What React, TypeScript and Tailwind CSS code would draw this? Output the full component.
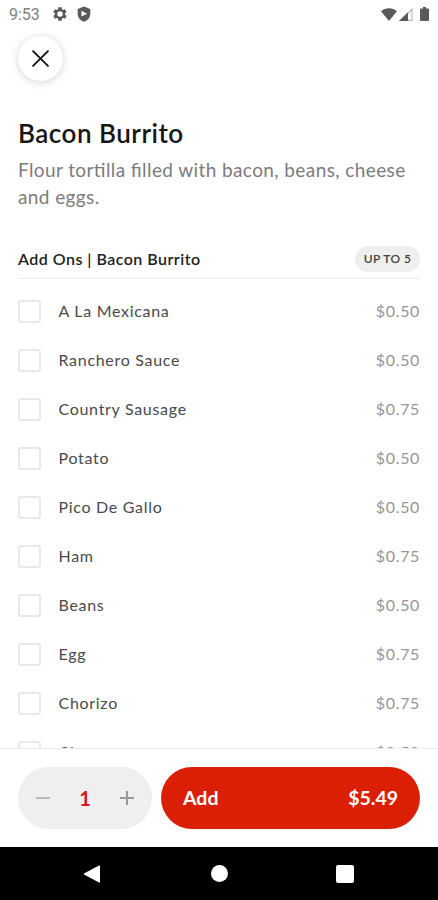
import { useState } from 'react';

type AddOn = {
  name: string;
  price: string;
};

const addOns: AddOn[] = [
  { name: 'A La Mexicana', price: '$0.50' },
  { name: 'Ranchero Sauce', price: '$0.50' },
  { name: 'Country Sausage', price: '$0.75' },
  { name: 'Potato', price: '$0.50' },
  { name: 'Pico De Gallo', price: '$0.50' },
  { name: 'Ham', price: '$0.75' },
  { name: 'Beans', price: '$0.50' },
  { name: 'Egg', price: '$0.75' },
  { name: 'Chorizo', price: '$0.75' },
  { name: 'Cheese', price: '$0.50' },
];

const StatusBar = () => (
  <div className="flex h-7 shrink-0 items-center justify-between pl-[9px] pr-2 text-[#5a5a5a]">
    <div className="flex items-center">
      <span className="w-[43px] pt-px font-['Roboto',sans-serif] text-[16px] leading-7 text-[#808080]">
        9:53
      </span>
      <svg className="h-4 w-4" viewBox="0 0 24 24" fill="currentColor">
        <path
          fillRule="evenodd"
          d="M19.4 13c.1-.3.1-.6.1-1s0-.7-.1-1l2.200-1.600c.2-.2.200-.4.100-.6l-2.100-3.600c-.1-.2-.4-.3-.6-.2l-2.500 1c-.5-.4-1.100-.7-1.700-1l-.4-2.600c0-.2-.2-.4-.5-.4h-4.100c-.3 0-.5.2-.5.4L9 5c-.6.300-1.200.6-1.700 1l-2.500-1c-.2-.1-.5 0-.6.2L2.100 8.800c-.1.200-.1.500.1.600L4.400 11c-.1.300-.1.600-.1 1s0 .7.100 1l-2.200 1.600c-.2.200-.2.400-.1.600l2.100 3.600c.1.200.4.300.6.200l2.500-1c.5.400 1.100.7 1.700 1l.4 2.600c0 .2.200.4.500.4H14c.300 0 .5-.2.500-.4l.4-2.600c.6-.3 1.200-.6 1.700-1l2.500 1c.2.100.5 0 .6-.2l2.100-3.600c.1-.2.100-.5-.1-.6L19.400 13ZM12 16.200a4.200 4.200 0 1 1 0-8.400 4.200 4.200 0 0 1 0 8.400Z"
        />
      </svg>
      <svg className="ml-2 h-4 w-4" viewBox="0 0 24 24" fill="currentColor">
        <path
          fillRule="evenodd"
          d="M12 .8 2.500 4.500v7C2.500 17 6.500 22 12 23.500c5.500-1.500 9.500-6.500 9.500-12v-7L12 .8ZM8.200 7.200v8.600L16.500 11.500 8.200 7.200Z"
        />
      </svg>
    </div>
    <div className="flex items-center">
      <svg className="h-[13px] w-4" viewBox="0 0 16 13" fill="currentColor">
        <path d="M0 3.200C4.500-.9 11.500-.9 16 3.200L8 13 0 3.200Z" />
      </svg>
      <svg className="ml-0.5 h-[13px] w-[14px]" viewBox="0 0 14 13" fill="currentColor">
        <path d="m0 13 9-8.700V13H0Z" />
        <path d="M0 13 13.500 0v13H0Zm3-1.200h9.500V2.700L3 11.800Z" fillRule="evenodd" opacity=".45" />
      </svg>
      <svg className="ml-[7px] mr-px h-[14px] w-[9px]" viewBox="0 0 9 14" fill="currentColor">
        <path d="M3 0h3v1.500h2.200c.5 0 .8.300.8.800v10.900c0 .5-.3.800-.8.800H.8c-.5 0-.8-.3-.8-.8V2.300c0-.5.300-.8.800-.8H3V0Z" />
      </svg>
    </div>
  </div>
);

const AddOnRow = ({ addOn }: { addOn: AddOn }) => {
  const [checked, setChecked] = useState(false);

  return (
    <label className="flex h-[49px] shrink-0 items-center text-[16px]">
      <input
        type="checkbox"
        checked={checked}
        onChange={() => setChecked(!checked)}
        className="mt-px h-[23px] w-[23px] appearance-none rounded-[3px] border-2 border-[#e9e9e9] bg-white checked:bg-[#da1f05]"
      />
      <span className="ml-[17.500px] flex-1 tracking-[0.7px] text-[#4a4a4a]">
        {addOn.name}
      </span>
      <span className="tracking-[0.65px] text-[#969696]">{addOn.price}</span>
    </label>
  );
};

const NavigationBar = () => (
  <div className="flex h-[53px] shrink-0 items-center justify-between bg-black pl-[83px] pr-[84px] text-white">
    <svg className="h-[18px] w-[18px]" viewBox="0 0 18 18" fill="currentColor">
      <path d="M16 .5c.6-.3 1 0 1 .6v15.800c0 .6-.4.900-1 .6L1 9.500c-.4-.2-.4-.8 0-1L16 .5Z" />
    </svg>
    <span className="ml-px h-[17px] w-[17px] rounded-full bg-white" />
    <span className="h-[18px] w-[18px] rounded-[2px] bg-white" />
  </div>
);

const App = () => {
  const [quantity, setQuantity] = useState(1);

  return (
    <div className="flex h-[900px] w-[438px] flex-col overflow-hidden bg-white font-['Lato',sans-serif]">
      <StatusBar />

      <main className="flex min-h-0 flex-1 flex-col overflow-hidden px-[18px] pt-2">
        <button
          aria-label="Close"
          className="flex h-[45px] w-[45px] shrink-0 items-center justify-center rounded-full bg-white shadow-[0_1px_8px_rgba(0,0,0,0.18)]"
        >
          <svg
            className="h-[17px] w-[17px]"
            viewBox="0 0 16 16"
            fill="none"
            stroke="#111"
            strokeWidth="1.7"
            strokeLinecap="round"
          >
            <path d="m1 1 14 14M15 1 1 15" />
          </svg>
        </button>

        <h1 className="mt-9 text-[26px] font-semibold leading-8 tracking-[0.5px] text-[#161616]">
          Bacon Burrito
        </h1>
        <p className="mt-[7px] text-[19px] leading-[27px] tracking-[0.4px] text-[#7c7c7c] [font-feature-settings:'liga'_1]">
          Flour tortilla filled with bacon, beans, cheese and eggs.
        </p>

        <div className="mt-9 flex h-[33px] shrink-0 items-start justify-between border-b border-[#ececec]">
          <h2 className="text-[16px] font-semibold leading-[26px] tracking-[0.48px] text-[#222]">
            Add Ons | Bacon Burrito
          </h2>
          <span className="flex h-[26px] w-[65px] items-center justify-center rounded-full bg-[#efefef] text-[12px] font-semibold tracking-[0.4px] text-[#444]">
            UP TO 5
          </span>
        </div>

        <div className="mt-[7px] flex flex-col">
          {addOns.map((addOn) => (
            <AddOnRow key={addOn.name} addOn={addOn} />
          ))}
        </div>
      </main>

      <footer className="flex h-[99px] shrink-0 items-center gap-[9px] border-t border-[#ededed] bg-white px-[18px]">
        <div className="flex h-[62px] w-[134px] items-center justify-between rounded-full bg-[#efefef] px-[18px]">
          <button
            aria-label="Decrease"
            onClick={() => setQuantity(Math.max(1, quantity - 1))}
          >
            <svg className="h-[14px] w-[14px]" viewBox="0 0 14 14" stroke="#b8b8b8" strokeWidth="2">
              <path d="M0 7h14" />
            </svg>
          </button>
          <span className="text-[20px] font-bold text-[#d2161a]">{quantity}</span>
          <button aria-label="Increase" onClick={() => setQuantity(quantity + 1)}>
            <svg className="h-[14px] w-[14px]" viewBox="0 0 14 14" stroke="#999" strokeWidth="2">
              <path d="M0 7h14M7 0v14" />
            </svg>
          </button>
        </div>
        <button className="flex h-[62px] flex-1 items-center justify-between rounded-full bg-[#da1f05] px-[22px] text-[19.500px] font-bold text-white">
          <span>Add</span>
          <span>$5.49</span>
        </button>
      </footer>

      <NavigationBar />
    </div>
  );
};

export default App;
